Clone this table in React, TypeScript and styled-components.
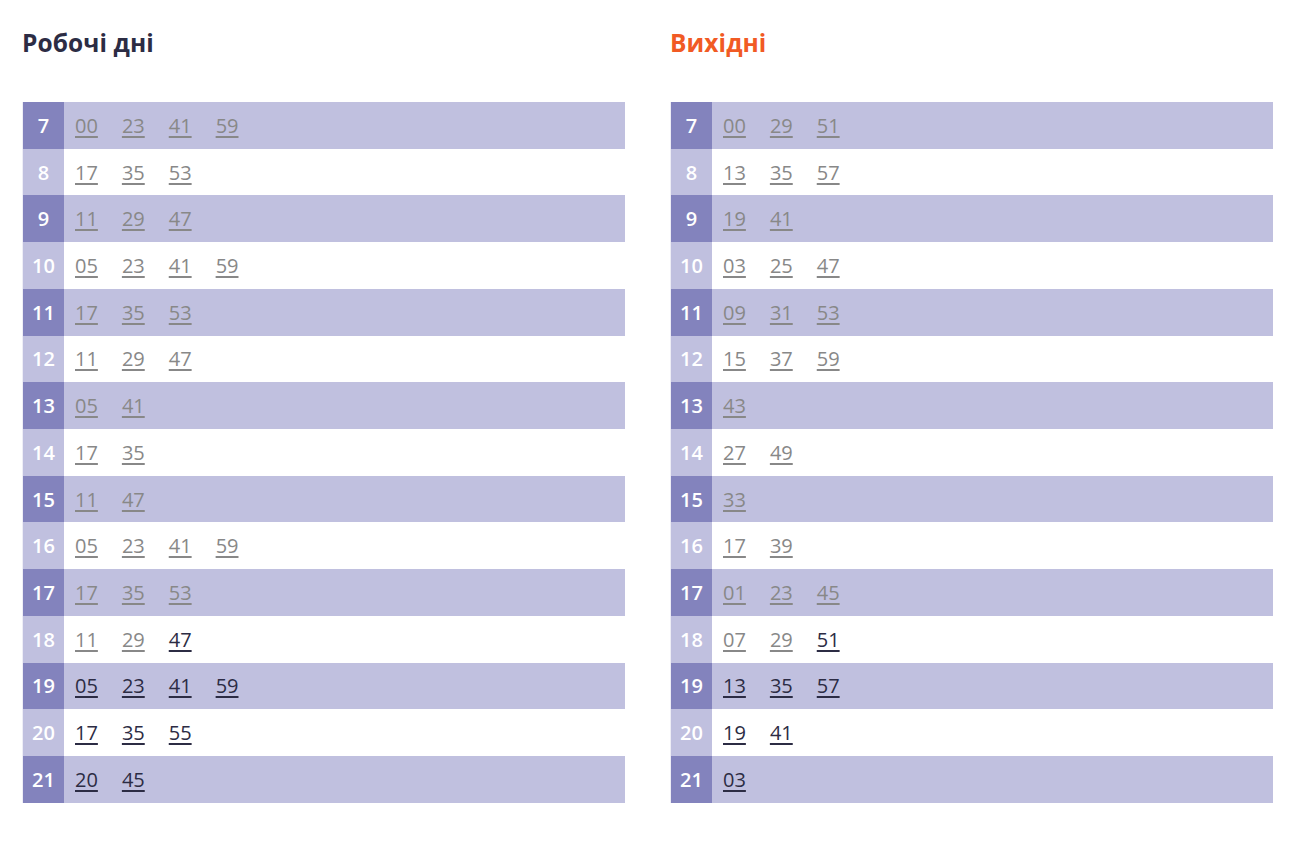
import * as React from 'react'
import styled, { createGlobalStyle } from 'styled-components'

interface Row {
  hour: number
  minutes: string[]
  nextFrom?: number
}

const workdays: Row[] = [
  { hour: 7, minutes: ['00', '23', '41', '59'] },
  { hour: 8, minutes: ['17', '35', '53'] },
  { hour: 9, minutes: ['11', '29', '47'] },
  { hour: 10, minutes: ['05', '23', '41', '59'] },
  { hour: 11, minutes: ['17', '35', '53'] },
  { hour: 12, minutes: ['11', '29', '47'] },
  { hour: 13, minutes: ['05', '41'] },
  { hour: 14, minutes: ['17', '35'] },
  { hour: 15, minutes: ['11', '47'] },
  { hour: 16, minutes: ['05', '23', '41', '59'] },
  { hour: 17, minutes: ['17', '35', '53'] },
  { hour: 18, minutes: ['11', '29', '47'], nextFrom: 2 },
  { hour: 19, minutes: ['05', '23', '41', '59'], nextFrom: 0 },
  { hour: 20, minutes: ['17', '35', '55'], nextFrom: 0 },
  { hour: 21, minutes: ['20', '45'], nextFrom: 0 },
]

const weekend: Row[] = [
  { hour: 7, minutes: ['00', '29', '51'] },
  { hour: 8, minutes: ['13', '35', '57'] },
  { hour: 9, minutes: ['19', '41'] },
  { hour: 10, minutes: ['03', '25', '47'] },
  { hour: 11, minutes: ['09', '31', '53'] },
  { hour: 12, minutes: ['15', '37', '59'] },
  { hour: 13, minutes: ['43'] },
  { hour: 14, minutes: ['27', '49'] },
  { hour: 15, minutes: ['33'] },
  { hour: 16, minutes: ['17', '39'] },
  { hour: 17, minutes: ['01', '23', '45'] },
  { hour: 18, minutes: ['07', '29', '51'], nextFrom: 2 },
  { hour: 19, minutes: ['13', '35', '57'], nextFrom: 0 },
  { hour: 20, minutes: ['19', '41'], nextFrom: 0 },
  { hour: 21, minutes: ['03'], nextFrom: 0 },
]

const GlobalStyle = createGlobalStyle`
  body {
    margin: 0;
    background: #fff;
    font-family: "Open Sans", "Noto Sans", sans-serif;
  }
`

const Schedule: React.FC<{ title: string; weekendTitle?: boolean; rows: Row[] }> = ({ title, weekendTitle, rows }) => (
  <ColumnStyled>
    <TitleStyled $weekend={weekendTitle}>{title}</TitleStyled>
    <TableStyled>
      <tbody>
        {rows.map((row, i) => (
          <RowStyled key={row.hour} $striped={i % 2 === 0}>
            <HourCell $striped={i % 2 === 0}>{row.hour}</HourCell>
            <MinutesCell>
              {row.minutes.map((m, j) => (
                <MinuteLink
                  key={m + j}
                  href="#"
                  $upcoming={row.nextFrom !== undefined && j >= row.nextFrom}
                >
                  {m}
                </MinuteLink>
              ))}
            </MinutesCell>
          </RowStyled>
        ))}
      </tbody>
    </TableStyled>
  </ColumnStyled>
)

export default function App() {
  return (
    <>
      <GlobalStyle />
      <PageStyled>
        <Schedule title="Робочі дні" rows={workdays} />
        <Schedule title="Вихідні" weekendTitle rows={weekend} />
      </PageStyled>
    </>
  )
}

const PageStyled = styled.div`
  display: flex;
  gap: 45px;
  padding: 28px 0 0 22px;
`

const ColumnStyled = styled.div`
  width: 603px;
`

const TitleStyled = styled.h2<{ $weekend?: boolean }>`
  margin: 0 0 44px 0;
  font-size: 24.5px;
  line-height: 30px;
  font-weight: 700;
  letter-spacing: 0.1px;
  color: ${({ $weekend }) => ($weekend ? '#f15a24' : '#2c2c44')};
`

const TableStyled = styled.table`
  width: 603px;
  border-collapse: collapse;
  border-left: 1px solid #eeeef6;
`

const RowStyled = styled.tr<{ $striped: boolean }>`
  height: 46.73px;
  background: ${({ $striped }) => ($striped ? '#c0c0df' : '#ffffff')};
  & + & td {
    border-top: 1px solid #e6e6f2;
  }
`

const HourCell = styled.td<{ $striped: boolean }>`
  width: 41px;
  padding: 0;
  text-align: center;
  font-size: 20px;
  font-weight: 600;
  color: #ffffff;
  background: ${({ $striped }) => ($striped ? '#8383bd' : '#c0c0df')};
`

const MinutesCell = styled.td`
  padding: 0 0 0 11px;
  display: flex;
  align-items: center;
  gap: 24px;
  height: 46.73px;
  box-sizing: border-box;
`

const MinuteLink = styled.a<{ $upcoming: boolean }>`
  font-size: 20px;
  color: ${({ $upcoming }) => ($upcoming ? '#2c2c44' : '#888888')};
  text-decoration: underline;
  text-underline-offset: 3px;
  text-decoration-thickness: 1.5px;
`
